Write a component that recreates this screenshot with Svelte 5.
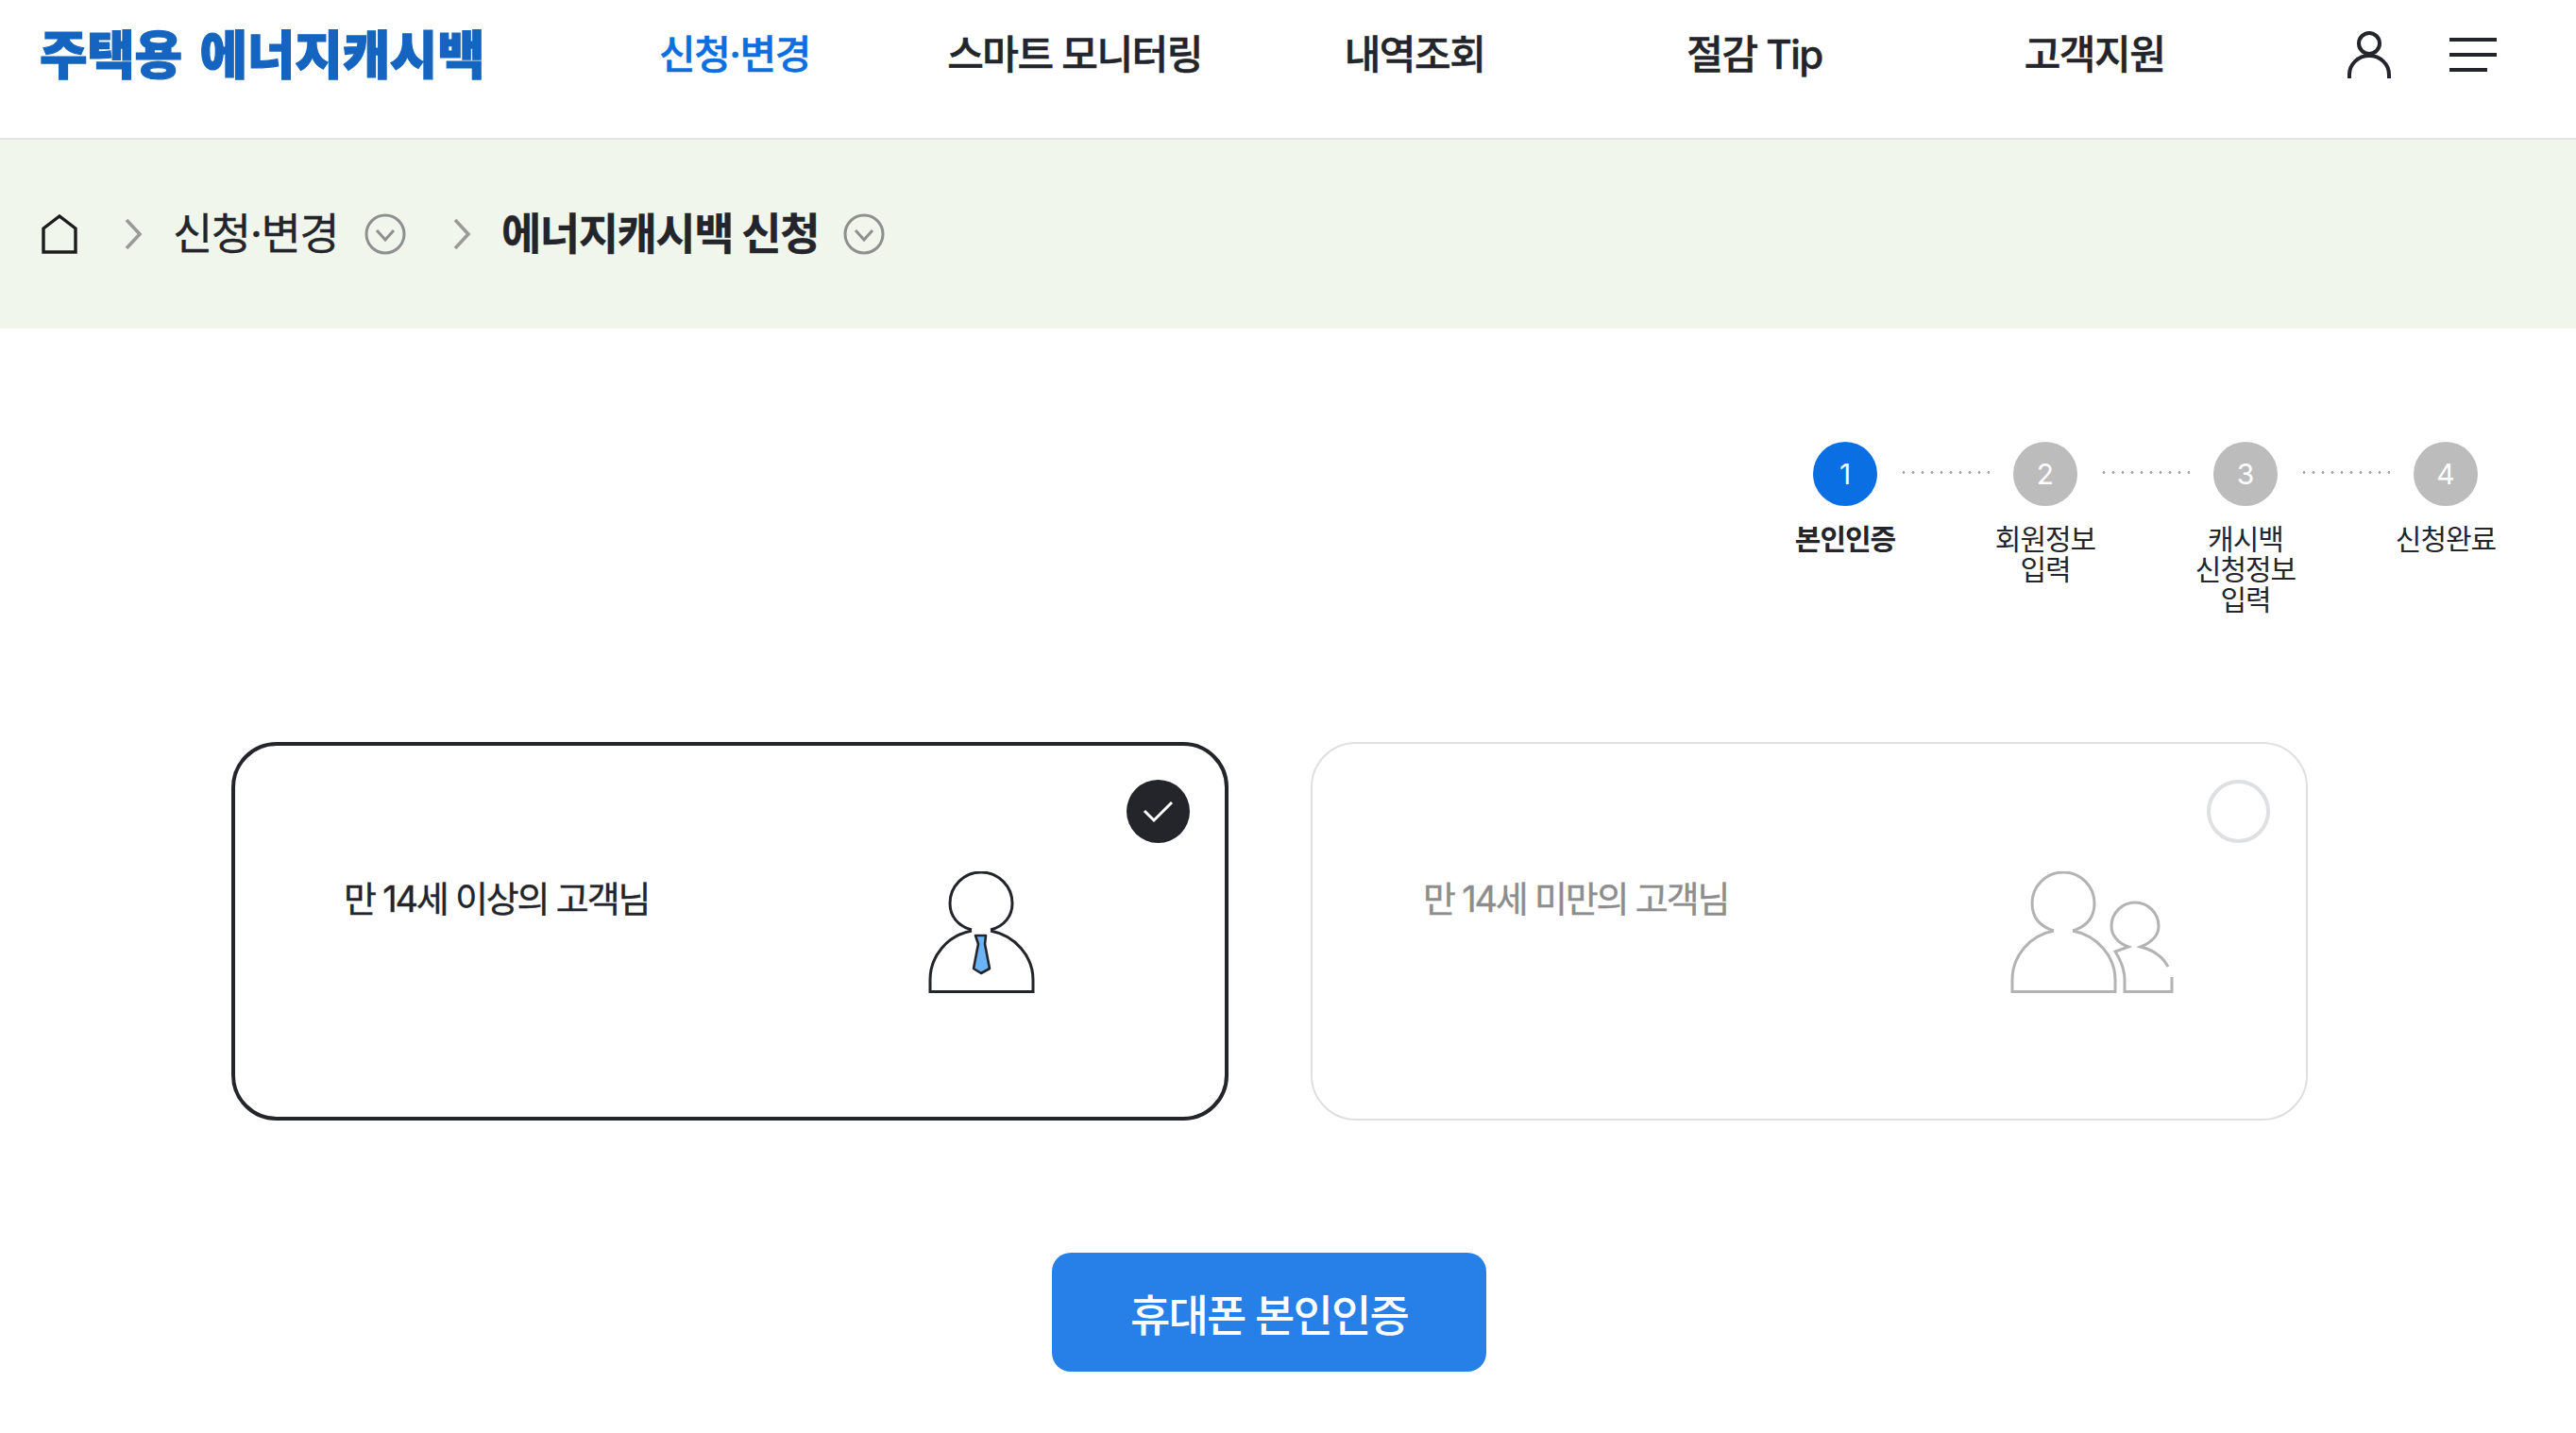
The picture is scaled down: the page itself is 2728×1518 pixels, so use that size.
<script>
  const nav = ['신청·변경', '스마트 모니터링', '내역조회', '절감 Tip', '고객지원']
  const steps = ['본인인증', '회원정보 입력', '캐시백 신청정보 입력', '신청완료']
</script>

{#snippet chevron()}
  <svg class="crumb-arrow" width="20" height="36" viewBox="0 0 20 36" fill="none">
    <path d="M3 3l14 15L3 33" stroke="#9a9a9a" stroke-width="3.6" />
  </svg>
{/snippet}

{#snippet circleDown()}
  <svg class="crumb-more" width="44" height="44" viewBox="0 0 44 44" fill="none">
    <circle cx="22" cy="22" r="20" stroke="#8f8f8f" stroke-width="3" />
    <path d="M13 18l9 10 9-10" stroke="#8f8f8f" stroke-width="3" />
  </svg>
{/snippet}

<div class="page">
  <header class="top">
    <div class="logo">주택용 에너지캐시백</div>
    <nav class="gnb">
      {#each nav as item, i}
        <span class={['gnb-item', i === 0 && 'active']}>{item}</span>
      {/each}
    </nav>
    <div class="top-icons">
      <svg width="46" height="50" viewBox="0 0 46 50" fill="none" stroke="#23252b" stroke-width="4">
        <circle cx="23" cy="13" r="11" />
        <path d="M2 50v-4a21 20 0 0 1 42 0v4" />
      </svg>
      <div class="burger">
        <span></span>
        <span></span>
        <span class="short"></span>
      </div>
    </div>
  </header>

  <div class="crumbs">
    <svg class="home" width="38" height="42" viewBox="0 0 38 42" fill="none">
      <path d="M2 40V15L19 2l17 13v25z" stroke="#1c1c1c" stroke-width="3.4" />
    </svg>
    {@render chevron()}
    <span class="crumb">신청·변경</span>
    {@render circleDown()}
    {@render chevron()}
    <span class="crumb current">에너지캐시백 신청</span>
    {@render circleDown()}
  </div>

  <ol class="steps">
    {#each steps as label, i}
      <li class={['step', i === 0 && 'on']}>
        <span class="num">{i + 1}</span>
        <span class="step-label">{label}</span>
      </li>
    {/each}
  </ol>

  <section class="cards">
    <div class="card selected">
      <p class="card-text">만 14세 이상의 고객님</p>
      <svg class="card-icon" width="113" height="129" viewBox="0 0 113 129" fill="none" stroke="#23252b" stroke-width="3">
        <path d="M46 62C31 58 23 47 23 34a33 33 0 0 1 66 0C89 47 81 58 66 62" />
        <path d="M46 63C20 68 2 90 2 115v12.500h109V115C111 90 92 68 66 63" />
        <path d="M50 68h11l-1 9 5 26-9 5-8-5 5-26z" fill="#6cb4f7" stroke-width="2.6" stroke-linejoin="round" />
      </svg>
      <span class="mark">
        <svg width="34" height="28" viewBox="0 0 34 28" fill="none">
          <path d="M2 13l10 10L31 4" stroke="#fff" stroke-width="3" />
        </svg>
      </span>
    </div>
    <div class="card">
      <p class="card-text">만 14세 미만의 고객님</p>
      <svg class="card-icon" width="173" height="129" viewBox="0 0 173 129" fill="none" stroke="#b3b3b3" stroke-width="3">
        <path d="M46 63C30 58 23 47 23 34a33 33 0 0 1 66 0C89 47 82 58 66 63" />
        <path d="M46 63C20 68 2 90 2 115v12.500h109V115C111 90 92 68 66 63" />
        <path d="M167 101C161 90 150 83 138 80c12-5 19-12 19-22a25 25 0 0 0-50 0c0 10 7 18 18 22l-14 5c7 11 10 20 10 30v12.500h50V112" />
      </svg>
      <span class="mark"></span>
    </div>
  </section>

  <div class="actions">
    <button class="btn" type="button">휴대폰 본인인증</button>
  </div>
</div>

<style>
  :global(body) {
    background: #fff;
  }

  .page {
    font-family: Inter, 'Noto Sans CJK KR', sans-serif;
    color: #23252b;
    min-height: 1518px;
  }

  .top {
    display: grid;
    grid-template-columns: 598px 1800px 1fr;
    align-items: center;
    box-sizing: border-box;
    height: 148px;
    padding-bottom: 30px;
    border-bottom: 2px solid #e4e4e4;
  }

  .logo {
    padding-left: 42px;
    font-size: 55px;
    font-weight: 900;
    line-height: 1;
    color: #1565c0;
    letter-spacing: -0.300px;
    word-spacing: 8px;
    white-space: nowrap;
    -webkit-text-stroke: 1.2px #1565c0;
  }

  .gnb {
    display: grid;
    grid-template-columns: repeat(5, 360px);
    justify-items: center;
  }

  .gnb-item {
    font-size: 42px;
    font-weight: 500;
    line-height: 1.2;
    letter-spacing: -1.500px;
    -webkit-text-stroke: 0.5px currentColor;
  }

  .gnb-item.active {
    color: #0b6fe0;
  }

  .top-icons {
    display: flex;
    align-items: center;
    gap: 62px;
    padding-left: 88px;
  }

  .burger {
    display: flex;
    flex-direction: column;
    gap: 12px;
    width: 50px;
  }

  .burger span {
    height: 4px;
    background: #23252b;
  }

  .burger .short {
    width: 40px;
  }

  .crumbs {
    display: flex;
    align-items: center;
    height: 200px;
    padding-left: 44px;
    background: #f0f6ec;
  }

  .crumb-arrow {
    margin: 0 32px 0 49px;
  }

  .crumb {
    font-size: 46px;
    line-height: 1.2;
    letter-spacing: -1.500px;
    margin-right: 28px;
    -webkit-text-stroke: 0.3px currentColor;
  }

  .crumb.current {
    font-weight: 700;
    margin-right: 26px;
  }

  .steps {
    display: grid;
    grid-template-columns: repeat(4, 212px);
    justify-content: end;
    margin: 0;
    padding: 120px 32px 0 0;
    list-style: none;
    height: 438px;
    box-sizing: border-box;
  }

  .step {
    position: relative;
    display: flex;
    flex-direction: column;
    align-items: center;
  }

  .step:not(:last-child)::after {
    content: '';
    position: absolute;
    top: 31px;
    left: 163px;
    width: 96px;
    height: 3px;
    background: radial-gradient(circle, #a9a9a9 1.400px, transparent 1.600px) 0 0 / 10px 3px repeat-x;
  }

  .num {
    display: flex;
    align-items: center;
    justify-content: center;
    width: 68px;
    height: 68px;
    border-radius: 50%;
    background: #bcbcbc;
    color: #fff;
    font-size: 30px;
  }

  .step.on .num {
    background: #0a6fe3;
  }

  .step-label {
    width: 112px;
    margin-top: 19px;
    font-size: 30px;
    line-height: 32px;
    letter-spacing: -1px;
    text-align: center;
  }

  .step.on .step-label {
    font-weight: 700;
  }

  .cards {
    display: grid;
    grid-template-columns: repeat(2, 1056px);
    gap: 87px;
    padding-left: 245px;
  }

  .card {
    position: relative;
    display: flex;
    align-items: flex-start;
    box-sizing: border-box;
    height: 401px;
    padding: 135px 0 0 117px;
    border: 2px solid #dedfe1;
    border-radius: 48px;
    color: #8d8d8d;
  }

  .card.selected {
    border: 4px solid #23252b;
    color: #23252b;
    padding: 133px 0 0 115px;
  }

  .card-text {
    width: 622px;
    margin: 0;
    font-size: 38px;
    line-height: 58px;
    letter-spacing: -2.200px;
    -webkit-text-stroke: 0.4px currentColor;
  }

  .selected .card-text {
    width: 619px;
  }

  .mark {
    position: absolute;
    top: 38px;
    right: 38px;
    display: flex;
    align-items: center;
    justify-content: center;
    box-sizing: border-box;
    width: 67px;
    height: 67px;
    border-radius: 50%;
    border: 4px solid #dfe0e2;
  }

  .selected .mark {
    top: 36px;
    right: 37px;
    background: #23252b;
    border: 0;
  }

  .actions {
    display: flex;
    justify-content: center;
    padding: 140px 40px 0 0;
  }

  .btn {
    width: 460px;
    height: 126px;
    border: 0;
    border-radius: 20px;
    background: #2680e8;
    color: #fff;
    font-family: inherit;
    font-size: 46px;
    font-weight: 500;
    letter-spacing: -1.800px;
  }
</style>
